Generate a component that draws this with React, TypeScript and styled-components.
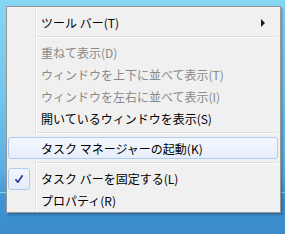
import React from "react";
import styled, { createGlobalStyle, css } from "styled-components";

const GlobalStyle = createGlobalStyle`
  html, body {
    margin: 0;
    width: 285px;
    height: 234px;
    overflow: hidden;
  }

  body {
    background:
      linear-gradient(to bottom, transparent 192px, #8fcdf0 192px, #8fcdf0 193px, transparent 193px),
      linear-gradient(to bottom, #84d6f3 0px, #74c7ec 90px, #5aaee2 170px, #3f93d3 200px, #3a8bcc 234px);
    font-family: "Noto Sans CJK JP", "Noto Sans", sans-serif;
  }
`;

const Desktop = styled.div`
  padding: 6px 4px 0 6px;
`;

const Menu = styled.div`
  box-sizing: border-box;
  width: 275px;
  padding: 4px 2px 1px 1px;
  border: 1px solid #979797;
  background:
    linear-gradient(
      to right,
      transparent 28px,
      #e2e3e3 28px,
      #e2e3e3 29px,
      #ffffff 29px,
      #ffffff 30px,
      transparent 30px
    ),
    #f0f0f0;
  box-shadow: 2px 2px 2px rgba(0, 0, 0, 0.25);
`;

const Item = styled.div<{ $hot?: boolean }>`
  display: grid;
  grid-template-columns: 22px 1fr 16px;
  column-gap: 10px;
  align-items: center;
  height: 22px;
  box-sizing: border-box;
  border: 1px solid transparent;
  border-radius: 3px;

  ${(p) =>
    p.$hot &&
    css`
      border-color: #aecbf0;
      background: linear-gradient(to bottom, #f3f7fd, #e6eefb);
    `}
`;

const Label = styled.span<{ $disabled?: boolean }>`
  font-size: 12px;
  line-height: 22px;
  letter-spacing: 0;
  white-space: nowrap;
  color: ${(p) => (p.$disabled ? "#8a8a8a" : "#000000")};
`;

const CheckBox = styled.span`
  display: flex;
  align-items: center;
  justify-content: center;
  width: 22px;
  height: 22px;
  margin-left: -1px;
  box-sizing: border-box;
  border: 1px solid #b0cdf1;
  border-radius: 3px;
  background: linear-gradient(to bottom, #f2f6fd, #e3ecfa);
`;

const Arrow = styled.span`
  width: 0;
  height: 0;
  border-top: 4px solid transparent;
  border-bottom: 4px solid transparent;
  border-left: 4px solid #1a1a1a;
`;

const Separator = styled.div`
  height: 8px;
  margin-left: 28px;
  display: flex;
  flex-direction: column;
  justify-content: center;

  &::before {
    content: "";
    height: 1px;
    background: #e0e0e0;
  }

  &::after {
    content: "";
    height: 1px;
    background: #ffffff;
  }
`;

function Check() {
  return (
    <svg width="10" height="10" viewBox="0 0 10 10">
      <path
        d="M1.5 5.2 L3.8 8.2 L8.6 1.2"
        fill="none"
        stroke="#2b3a9c"
        strokeWidth="1.7"
        strokeLinejoin="round"
      />
    </svg>
  );
}

type Entry =
  | { kind: "item"; label: string; disabled?: boolean; hot?: boolean; checked?: boolean; sub?: boolean }
  | { kind: "sep" };

const entries: Entry[] = [
  { kind: "item", label: "ツール バー(T)", sub: true },
  { kind: "sep" },
  { kind: "item", label: "重ねて表示(D)", disabled: true },
  { kind: "item", label: "ウィンドウを上下に並べて表示(T)", disabled: true },
  { kind: "item", label: "ウィンドウを左右に並べて表示(I)", disabled: true },
  { kind: "item", label: "開いているウィンドウを表示(S)" },
  { kind: "sep" },
  { kind: "item", label: "タスク マネージャーの起動(K)", hot: true },
  { kind: "sep" },
  { kind: "item", label: "タスク バーを固定する(L)", checked: true },
  { kind: "item", label: "プロパティ(R)" },
];

export default function App() {
  return (
    <>
      <GlobalStyle />
      <Desktop>
        <Menu>
          {entries.map((e, i) =>
            e.kind === "sep" ? (
              <Separator key={i} />
            ) : (
              <Item key={i} $hot={e.hot}>
                {e.checked ? (
                  <CheckBox>
                    <Check />
                  </CheckBox>
                ) : (
                  <span />
                )}
                <Label $disabled={e.disabled}>{e.label}</Label>
                {e.sub ? <Arrow /> : <span />}
              </Item>
            )
          )}
        </Menu>
      </Desktop>
    </>
  );
}
